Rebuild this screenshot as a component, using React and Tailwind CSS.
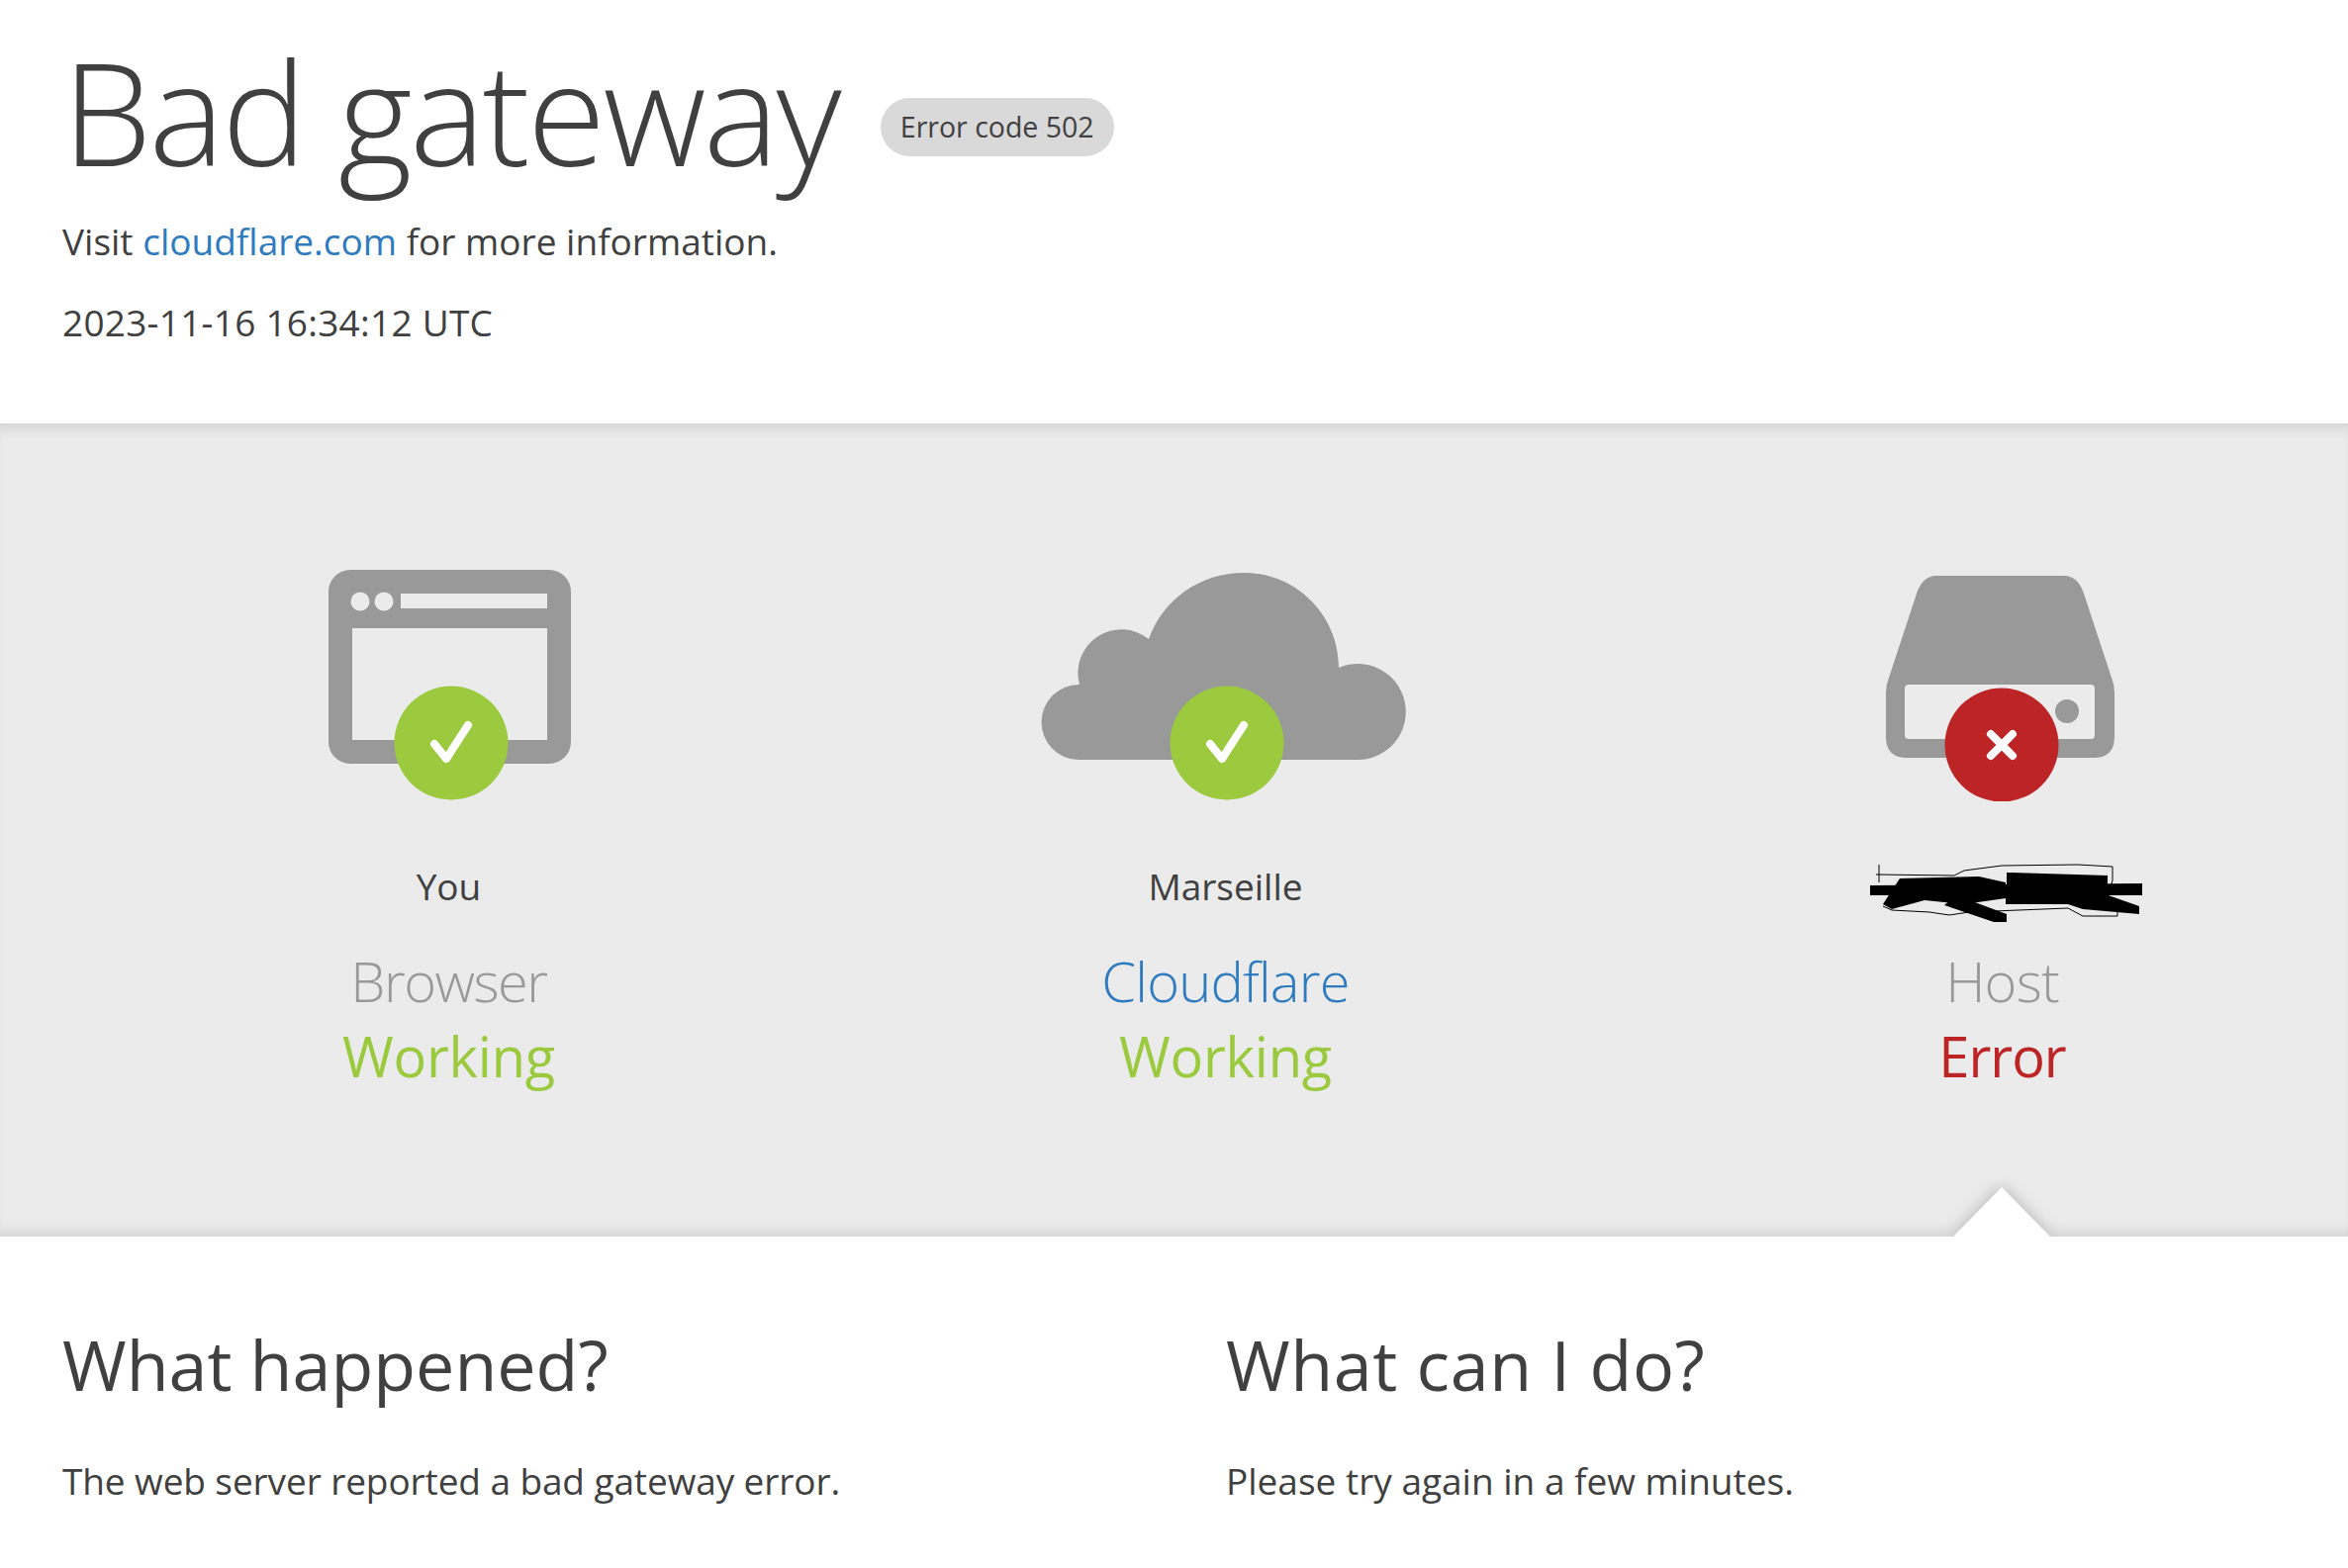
import React from 'react';

const font = "font-['Open_Sans',sans-serif]";

function BrowserIcon() {
  return (
    <svg viewBox="254 570 400 240" width="400" height="240">
      <path fillRule="evenodd" fill="#999" d="M354 576H555A22 22 0 0 1 577 598V750A22 22 0 0 1 555 772H354A22 22 0 0 1 332 750V598A22 22 0 0 1 354 576ZM356 635V748H553V635ZM405 600V615H553V600Z" />
      <circle cx="364" cy="608" r="9.5" fill="#ebebeb" />
      <circle cx="388" cy="608" r="9.5" fill="#ebebeb" />
      <circle cx="456" cy="751" r="57.5" fill="#9bca3e" />
      <path d="M439 752L451 767L473 733" fill="none" stroke="#fff" strokeWidth="8" strokeLinecap="round" strokeLinejoin="round" />
    </svg>
  );
}

function CloudIcon() {
  return (
    <svg viewBox="1039 570 400 240" width="400" height="240">
      <path fill="#999" d="M1090 768A38 38 0 0 1 1091 692A44 44 0 0 1 1161 646C1175 606 1213 579 1257 579C1310 579 1353 622 1353 675A48.5 48.5 0 1 1 1373 768Z" />
      <circle cx="1240" cy="751" r="57.5" fill="#9bca3e" />
      <path d="M1223 752L1235 767L1257 733" fill="none" stroke="#fff" strokeWidth="8" strokeLinecap="round" strokeLinejoin="round" />
    </svg>
  );
}

function ServerIcon() {
  return (
    <svg viewBox="1824 570 400 240" width="400" height="240">
      <path fillRule="evenodd" fill="#999" d="M1957 582H2086Q2100 582 2106 600L2134 685Q2137 692 2137 700V745Q2137 766 2116 766H1927Q1906 766 1906 745V700Q1906 692 1909 685L1937 600Q1943 582 1957 582ZM1929 692Q1925 692 1925 696V743Q1925 747 1929 747H2113Q2117 747 2117 743V696Q2117 692 2113 692Z" />
      <circle cx="2089" cy="719" r="12" fill="#999" />
      <circle cx="2023" cy="753" r="57.5" fill="#bd2426" />
      <path d="M2012 742L2034 764M2034 742L2012 764" fill="none" stroke="#fff" strokeWidth="8" strokeLinecap="round" />
    </svg>
  );
}

function Scribble() {
  return (
    <svg viewBox="1885 870 285 65" width="285" height="65" className="block self-start mt-[5px] ml-[8px]">
      <path d="M1899 874V892M1896 884L1975 885L1985 880L2023 875L2100 874L2135 876V890L2132 900M1903 916L1912 920L1950 922L1970 925L1990 922L2090 918L2105 926L2140 926V918" fill="none" stroke="#000" strokeWidth="1" />
      <path d="M1890 895L2165 893V905L1890 905Z" fill="#000" />
      <path d="M1920 888L1960 887L2000 886L2027 892V908L1985 914L1945 910L1912 919L1903 914Z" fill="#000" />
      <path d="M1977 905L2028 924V932L2015 932L1965 915Z" fill="#000" />
      <path d="M2028 882L2130 885V896H2028Z" fill="#000" />
      <path d="M2027 903H2125L2162 916V924L2105 919L2090 914H2027Z" fill="#000" />
    </svg>
  );
}

function Column({ icon, place, name, nameClass, status, statusClass, scribble }) {
  return (
    <div className="flex flex-col items-center">
      {icon}
      <div className="h-[61px] mt-[55px] flex items-center justify-center text-[37px] leading-[61px] text-[#404040]">
        {scribble ? <Scribble /> : place}
      </div>
      <div className={`mt-[27px] text-[56px] leading-[76px] font-light ${nameClass}`}>{name}</div>
      <div className={`text-[56px] leading-[76px] ${statusClass}`}>{status}</div>
    </div>
  );
}

export default function App() {
  return (
    <div className={`w-[2373px] h-[1585px] overflow-hidden bg-white text-[#404040] ${font}`}>
      {/* Header */}
      <header className="h-[428px] pl-[63px] pt-[17px]">
        <div className="flex items-center">
          <h1 className="text-[144px] leading-[190px] font-light tracking-[-2.7px]">Bad gateway</h1>
          <span className="ml-[42px] mt-[32px] h-[59px] px-[20px] rounded-full bg-[#d9d9d9] flex items-center text-[28.5px]">Error code 502</span>
        </div>
        <p className="mt-[6px] text-[37px] leading-[62px]">
          Visit <a className="text-[#2f7bbf]" href="#">cloudflare.com</a> for more information.
        </p>
        <p className="mt-[20px] text-[37px] leading-[62px] tracking-[0.25px]">2023-11-16 16:34:12 UTC</p>
      </header>

      {/* Status row */}
      <section className="relative h-[822px] bg-[#ebebeb] pt-[142px] pl-[61px] shadow-[inset_0_14px_16px_-12px_rgba(0,0,0,0.14),inset_0_-14px_16px_-12px_rgba(0,0,0,0.14)]">
        <div className="grid grid-cols-3 w-[2355px]">
          <Column icon={<BrowserIcon />} place="You" name="Browser" nameClass="text-[#999] tracking-[-1.5px]" status="Working" statusClass="text-[#9bca3e] tracking-[-0.2px]" />
          <Column icon={<CloudIcon />} place="Marseille" name="Cloudflare" nameClass="text-[#2f7bbf] tracking-[-0.8px]" status="Working" statusClass="text-[#9bca3e] tracking-[-0.2px]" />
          <Column icon={<ServerIcon />} scribble name="Host" nameClass="text-[#999] tracking-[-0.8px]" status="Error" statusClass="text-[#bd2426] tracking-[-1px]" />
        </div>
        <svg viewBox="0 0 130 60" width="130" height="60" className="absolute left-[1958px] bottom-0">
          <path d="M16 60L65 10L114 60Z" fill="#fff" className="drop-shadow-[0_0_8px_rgba(0,0,0,0.25)]" />
        </svg>
      </section>

      {/* Explanation */}
      <section className="grid grid-cols-2 pl-[63px] pt-[84px] w-[2415px]">
        <div>
          <h2 className="text-[70px] leading-[90px]">What happened?</h2>
          <p className="mt-[42px] text-[37px] leading-[62px] tracking-[-0.1px]">The web server reported a bad gateway error.</p>
        </div>
        <div>
          <h2 className="text-[70px] leading-[90px] tracking-[0.6px]">What can I do?</h2>
          <p className="mt-[42px] text-[37px] leading-[62px]">Please try again in a few minutes.</p>
        </div>
      </section>
    </div>
  );
}
